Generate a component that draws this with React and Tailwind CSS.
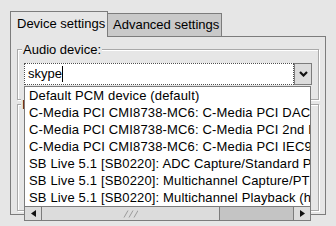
export default function App() {
  const devices = [
    "Default PCM device (default)",
    "C-Media PCI CMI8738-MC6: C-Media PCI DAC",
    "C-Media PCI CMI8738-MC6: C-Media PCI 2nd DAC",
    "C-Media PCI CMI8738-MC6: C-Media PCI IEC958",
    "SB Live 5.1 [SB0220]: ADC Capture/Standard PCM Playback",
    "SB Live 5.1 [SB0220]: Multichannel Capture/PT Playback",
    "SB Live 5.1 [SB0220]: Multichannel Playback (hw:0,3)",
  ];

  return (
    <div className="relative h-[226px] w-[336px] overflow-hidden bg-[#e6e6e6] font-['Liberation_Sans',Arial,sans-serif] text-[13px] leading-[16px] text-black">
      <div className="pl-[10px] pt-[11px]">
        {/* tabs */}
        <div className="flex items-end">
          <div className="relative z-10 -mb-px h-[26px] w-[98px] border border-b-0 border-[#7c7c7c] bg-[#e6e6e6] pl-[6px] pt-[4px] whitespace-nowrap">
            Device settings
          </div>
          <div className="h-[23px] w-[114px] border-t border-r border-[#7c7c7c] bg-[#c9c9c9] pl-[5px] pt-[3px] whitespace-nowrap">
            Advanced settings
          </div>
        </div>

        {/* tab pane */}
        <div className="h-[179px] w-[316px] border border-[#7c7c7c] pl-[6px] pt-[12px]">
          <div className="relative h-[51px] w-[302px] border border-[#a9a9a9] pl-[6px] pt-[13px] shadow-[inset_1px_1px_0_#fff,1px_1px_0_#fff]">
            <span className="absolute -top-[8px] left-[4px] bg-[#e6e6e6] px-[1px] whitespace-nowrap">
              Audio device:
            </span>
            <div className="flex h-[22px]">
              <div className="flex w-[270px] items-center border border-dotted border-[#505050] bg-white pl-[3px]">
                <span>skype</span>
                <span className="h-[16px] w-px bg-black" />
              </div>
              <div className="flex w-[18px] items-center justify-center border border-[#7c7c7c] bg-[#dcdcdc]">
                <svg width="9" height="6" viewBox="0 0 9 6">
                  <path d="M1 1 L4.5 4.5 L8 1" fill="none" stroke="#111" strokeWidth="2.2" />
                </svg>
              </div>
            </div>
          </div>

          <div className="relative mt-[4px] h-[107px] w-[302px] border border-[#a9a9a9] shadow-[inset_1px_1px_0_#fff,1px_1px_0_#fff]">
            <span className="absolute -top-[8px] left-[3px] bg-[#e6e6e6] px-[1px] whitespace-nowrap">
              Input device:
            </span>
          </div>
        </div>
      </div>

      {/* dropdown list */}
      <div className="absolute left-[24px] top-[86px] flex h-[135px] w-[287px] flex-col border border-[#7c7c7c] bg-white">
        <div className="h-[119px] overflow-hidden pl-[4px]">
          {devices.map((d) => (
            <div key={d} className="h-[17px] leading-[17px] tracking-[0.15px] whitespace-nowrap">
              {d}
            </div>
          ))}
        </div>
        <div className="flex h-[14px] border-t border-[#7c7c7c] bg-[#c4c4c4]">
          <div className="flex w-[17px] items-center justify-center border-r border-[#7c7c7c] bg-[#dcdcdc]">
            <svg width="5" height="7" viewBox="0 0 5 7">
              <polygon points="5,0 0,3.5 5,7" fill="#111" />
            </svg>
          </div>
          <div className="flex w-[178px] items-center justify-center border-r border-[#7c7c7c] bg-[#dcdcdc]">
            <svg width="15" height="8" viewBox="0 0 15 8">
              <path d="M1 7.5 L5 0.5 M6 7.5 L10 0.5 M11 7.5 L15 0.5" stroke="#9a9a9a" strokeWidth="1" fill="none" />
            </svg>
          </div>
          <div className="flex-1" />
          <div className="flex w-[17px] items-center justify-center border-l border-[#7c7c7c] bg-[#dcdcdc]">
            <svg width="5" height="7" viewBox="0 0 5 7">
              <polygon points="0,0 5,3.5 0,7" fill="#111" />
            </svg>
          </div>
        </div>
      </div>
    </div>
  );
}
